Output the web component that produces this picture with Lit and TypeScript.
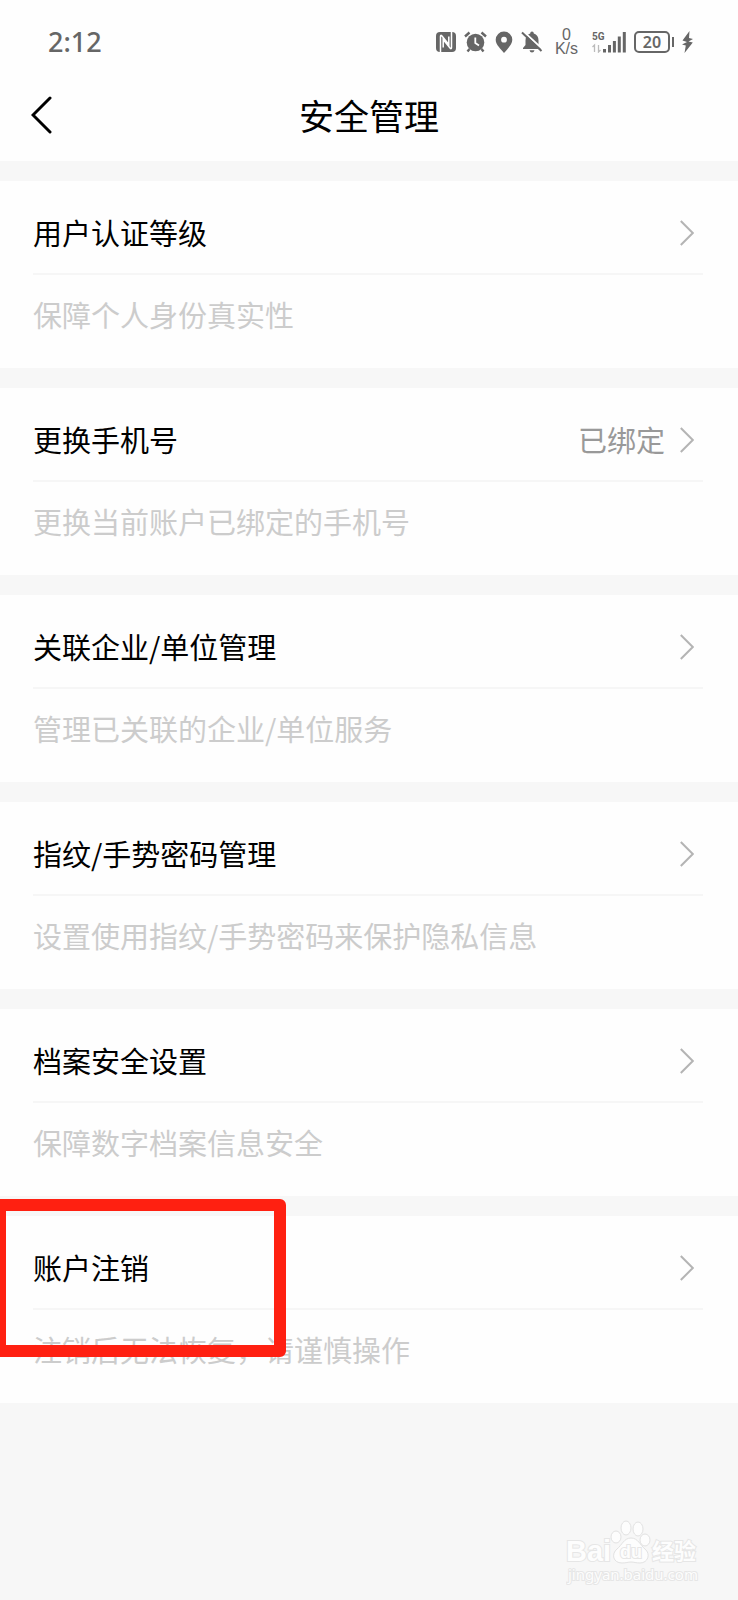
import { LitElement, html, css, svg, nothing } from "lit";
import { customElement, property } from "lit/decorators.js";

interface SettingItem {
  title: string;
  hint: string;
  value?: string;
  marked?: boolean;
}

const ITEMS: SettingItem[] = [
  { title: "用户认证等级", hint: "保障个人身份真实性" },
  { title: "更换手机号", hint: "更换当前账户已绑定的手机号", value: "已绑定" },
  { title: "关联企业/单位管理", hint: "管理已关联的企业/单位服务" },
  { title: "指纹/手势密码管理", hint: "设置使用指纹/手势密码来保护隐私信息" },
  { title: "档案安全设置", hint: "保障数字档案信息安全" },
  { title: "账户注销", hint: "注销后无法恢复，请谨慎操作", marked: true },
];

@customElement("status-bar")
class StatusBar extends LitElement {
  static styles = css`
    :host {
      display: flex;
      align-items: center;
      justify-content: space-between;
      height: 84px;
      padding: 0 45px 0 48px;
      color: #666;
      font-family: "Noto Sans", sans-serif;
    }
    .time {
      font-size: 27px;
      font-weight: 500;
      line-height: 32px;
    }
    .icons {
      display: flex;
      align-items: center;
      gap: 8px;
    }
    svg {
      display: block;
      fill: currentColor;
    }
    .speed {
      display: flex;
      flex-direction: column;
      align-items: center;
      padding: 0 6px 0 4px;
      font-family: "Liberation Sans", sans-serif;
      font-size: 16px;
      line-height: 14px;
    }
    .battery {
      display: flex;
      align-items: center;
      gap: 2px;
    }
    .level {
      box-sizing: border-box;
      width: 36px;
      height: 22px;
      border: 2px solid;
      border-radius: 5px;
      font-size: 16px;
      font-weight: 600;
      line-height: 18px;
      text-align: center;
    }
    .tip {
      width: 2px;
      height: 10px;
      background: currentColor;
    }
  `;

  render() {
    return html`
      <span class="time">2:12</span>
      <div class="icons">
        <svg width="20" height="20" viewBox="0 0 20 20" aria-hidden="true">
          <path d="M4 0H16Q20 0 20 4V16Q20 20 16 20H4Q0 20 0 16V4Q0 0 4 0Z" />
          <path d="M4.500 20V4.500Q4.500 2.500 6 4L12.800 12.500V4.500M15.500 0V15.500Q15.500 17.500 14 16L7.200 7.500V15.500"
            fill="none" stroke="#fff" stroke-width="1.500" />
        </svg>
        <svg width="23" height="22" viewBox="0 0 23 22" aria-hidden="true">
          <circle cx="11.500" cy="11.500" r="8.800" />
          <path d="M1 5.500L5.500 1.500M22 5.500L17.500 1.500M5.500 18L3.500 20.500M17.500 18L19.500 20.500"
            stroke="currentColor" stroke-width="2.400" />
          <path d="M11.300 6.500V12L15 14.500" fill="none" stroke="#fff" stroke-width="1.800" />
        </svg>
        <svg width="18" height="22" viewBox="0 0 18 22" aria-hidden="true">
          <path fill-rule="evenodd"
            d="M9 0.500A8.300 8.300 0 0 0 .7 8.800C.7 14 6 18 9 22C12 18 17.300 14 17.300 8.800A8.300 8.300 0 0 0 9 .5ZM9 5.800A2.900 2.900 0 1 1 9 11.600A2.900 2.900 0 1 1 9 5.800Z" />
        </svg>
        <svg width="22" height="22" viewBox="0 0 22 22" aria-hidden="true">
          <path d="M11 0.500Q12.800 .5 12.800 2.500Q17.500 4 17.500 9.500V14L20 17V18H2V17L4.500 14V9.500Q4.500 4 9.200 2.500Q9.200 .5 11 .5ZM8.500 19.200H13.500Q13 21.500 11 21.500Q9 21.500 8.500 19.200Z" />
          <path d="M2.500 .5L22.500 19" stroke="#fff" stroke-width="2" />
          <path d="M1 1.500L20.500 20" stroke="currentColor" stroke-width="2" />
        </svg>
        <span class="speed"><span>0</span><span>K/s</span></span>
        <svg width="34" height="22" viewBox="0 0 34 22" role="img" aria-label="5G">
          <text x="0" y="9" font-family="Roboto, sans-serif" font-size="10" font-weight="700">5G</text>
          <path d="M2.500 21V14L.5 16M6.500 14V21L8.500 19" fill="none" stroke="#bbb" stroke-width="1.300" />
          <path d="M11 18H14V21.500H11ZM16 14H19V21.500H16ZM20.900 10H23.900V21.500H20.900ZM25.800 5.500H28.800V21.500H25.800ZM30.800 1H33.800V21.500H30.800Z" />
        </svg>
        <span class="battery"><span class="level">20</span><span class="tip"></span></span>
        <svg width="11" height="22" viewBox="0 0 11 22" aria-hidden="true">
          <path d="M7.500 0L.5 9.500L5 11L0 13.500L3.800 14.500L2.500 22L10.800 11.500L6.500 10.500L11 8L7 7Z" />
        </svg>
      </div>
    `;
  }
}

@customElement("setting-card")
class SettingCard extends LitElement {
  @property({ attribute: false }) item!: SettingItem;

  static styles = css`
    :host {
      display: block;
      position: relative;
      padding-left: 33px;
      background: #fefefe;
      font-size: 29px;
      line-height: 40px;
    }
    .row {
      display: flex;
      align-items: center;
      gap: 15px;
      width: 100%;
      padding: 31px 44px 21px 0;
      border: 0;
      background: none;
      color: #000;
      font: inherit;
      text-align: left;
      cursor: pointer;
    }
    .title {
      flex: 1;
    }
    .value {
      color: #999;
    }
    .chevron {
      fill: none;
      stroke: #b4b4b4;
      stroke-width: 2;
    }
    .rule {
      height: 2px;
      margin: 0 35px 0 0;
      border: 0;
      background: #f6f6f6;
    }
    .hint {
      margin: 0;
      padding: 19px 33px 34px 0;
      color: #ccc;
    }
    .mark {
      position: absolute;
      top: -17px;
      left: -6px;
      box-sizing: border-box;
      width: 292px;
      height: 158px;
      border: 12px solid #ff2011;
      border-radius: 6px;
      pointer-events: none;
    }
  `;

  render() {
    const { title, hint, value, marked } = this.item;
    return html`
      <button class="row" type="button">
        <span class="title">${title}</span>
        ${value ? html`<span class="value">${value}</span>` : nothing}
        <svg class="chevron" width="14" height="28" viewBox="0 0 14 28" aria-hidden="true">
          <path d="M.8 3L12.800 15L.8 27" />
        </svg>
      </button>
      <hr class="rule" />
      <p class="hint" lang="zh-CN">${hint}</p>
      ${marked ? html`<span class="mark"></span>` : nothing}
    `;
  }
}

@customElement("app-root")
class AppRoot extends LitElement {
  static styles = css`
    :host {
      display: flex;
      flex-direction: column;
      min-height: 100vh;
      background: #f7f7f7;
      font-family: "Noto Sans CJK SC", sans-serif;
    }
    .top {
      background: #fefefe;
    }
    .nav {
      display: grid;
      grid-template-columns: 1fr auto 1fr;
      align-items: center;
      height: 77px;
      padding: 0 31px 16px;
      box-sizing: border-box;
    }
    .back {
      justify-self: start;
      padding: 0;
      border: 0;
      background: none;
      cursor: pointer;
    }
    .back svg {
      display: block;
      fill: none;
      stroke: #000;
      stroke-width: 3;
      stroke-linecap: round;
    }
    .heading {
      margin: 0;
      color: #000;
      font-size: 35px;
      font-weight: 400;
      line-height: 48px;
    }
    .list {
      display: flex;
      flex-direction: column;
      gap: 20px;
      padding-top: 20px;
    }
    .brand {
      display: flex;
      justify-content: flex-end;
      margin-top: auto;
      padding: 0 38px 14px 0;
    }
    .brand text {
      fill: #fdfdfd;
      stroke: #e6e6e6;
      stroke-width: 2;
      paint-order: stroke;
    }
    .paw {
      fill: #fdfdfd;
      stroke: #e2e2e2;
      stroke-width: 1;
    }
  `;

  render() {
    const toes = [
      [50, 17, 5, 6],
      [60, 8, 5, 7],
      [72, 9, 5, 7],
      [79, 20, 5, 6],
    ];
    return html`
      <header class="top">
        <status-bar></status-bar>
        <nav class="nav">
          <button class="back" type="button" aria-label="返回">
            <svg width="22" height="38" viewBox="0 0 22 38"><path d="M19 2L2 19L19 36" /></svg>
          </button>
          <h1 class="heading">安全管理</h1>
        </nav>
      </header>
      <main class="list">
        ${ITEMS.map((item) => html`<setting-card .item=${item}></setting-card>`)}
      </main>
      <footer class="brand">
        <svg width="134" height="66" viewBox="0 0 134 66" role="img" aria-label="Baidu 经验">
          ${toes.map(
            ([x, y, rx, ry]) => svg`<ellipse class="paw" cx=${x} cy=${y} rx=${rx} ry=${ry} />`
          )}
          <path class="paw"
            d="M65 18C72 18 74 25 79 29C85 34 82 43 74 43C70 43 68 42 65 42C62 42 60 43 56 43C47 43 45 34 51 29C56 25 58 18 65 18Z" />
          <text x="0" y="41" font-family="Liberation Sans, sans-serif" font-size="29" font-weight="700">Bai</text>
          <text x="54" y="38" font-family="Liberation Sans, sans-serif" font-size="18" font-weight="700">du</text>
          <text x="86" y="39" font-family="Noto Sans CJK SC, sans-serif" font-size="22" font-weight="700">经验</text>
          <text x="2" y="60" font-family="Noto Sans, sans-serif" font-size="15">jingyan.baidu.com</text>
        </svg>
      </footer>
    `;
  }
}
